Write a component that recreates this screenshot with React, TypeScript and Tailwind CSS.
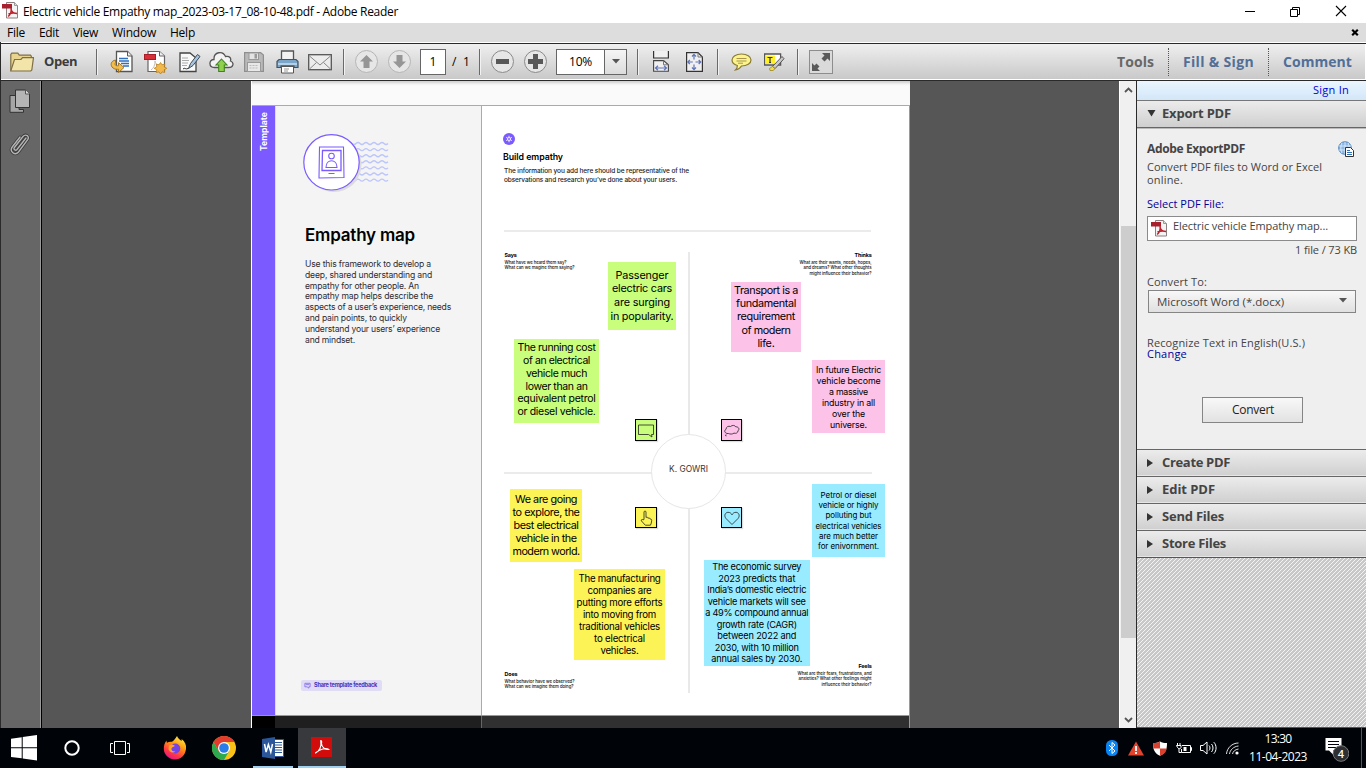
import { useLayoutEffect, useRef, useState } from "react";
import type { ReactNode } from "react";

const UI = "font-['Open_Sans','Noto_Sans',sans-serif]";
const DOC = "font-[Inter,'Noto_Sans',sans-serif]";

/* One line of text whose tracking is adjusted so that it spans `w` pixels. */
function Line({ w, className = "", children }: { w: number; className?: string; children: string }) {
  const ref = useRef<HTMLSpanElement>(null);
  const [tracking, setTracking] = useState(0);
  useLayoutEffect(() => {
    const el = ref.current;
    if (!el) return;
    const natural = el.getBoundingClientRect().width - tracking * children.length;
    const next = (w - natural) / children.length;
    if (Math.abs(next - tracking) > 0.005) setTracking(next);
  });
  return (
    <span ref={ref} className={`inline-block shrink-0 whitespace-pre ${className}`} style={{ letterSpacing: tracking }}>
      {children}
    </span>
  );
}

function PdfIcon({ className }: { className: string }) {
  return (
    <svg viewBox="0 0 17 17" className={className}>
      <path d="M4.500 .5h8l3 3v12.500h-11z" fill="#f4f4f4" stroke="#8b7f80" />
      <path d="M12.500 .5v3h3" fill="#ddd" stroke="#999" />
      <rect x="0" y="2" width="10" height="4.500" fill="#a81f2d" />
      <path d="M9 6c.8 3 .2 5.500-2.800 8.600M9 7c.4 2.800 2.500 4.300 6 4.500M6.500 12c2.400-1 5.500-1.300 8.500-.6" fill="none" stroke="#c01f2b" strokeWidth="1.500" />
    </svg>
  );
}

function Sep({ className }: { className: string }) {
  return <div className={`h-[26px] w-px shrink-0 bg-[#6a6a6a] shadow-[1px_0_0_#f2f2f2] ${className}`} />;
}

function RoundButton({ className, children }: { className: string; children: ReactNode }) {
  return (
    <svg viewBox="0 0 23 23" className={`h-[23px] w-[23px] shrink-0 ${className}`}>
      <circle cx="11.500" cy="11.500" r="11" fill="#e6e6e6" stroke="currentColor" />
      {children}
    </svg>
  );
}

function TitleBar() {
  return (
    <div className="flex h-[23px] shrink-0 items-center bg-white">
      <PdfIcon className="mb-[2px] ml-[2px] h-[17px] w-[17px]" />
      <Line w={375} className="ml-1 text-[12px] leading-[22px] text-black">Electric vehicle Empathy map_2023-03-17_08-10-48.pdf - Adobe Reader</Line>
      <svg viewBox="0 0 104 14" className="mr-[18px] mb-[2px] ml-auto h-[14px] w-[104px]" fill="none" stroke="#000">
        <path d="M1 7.500h10" />
        <path d="M46.500 5.500h7v7h-7zM48.500 5.500v-2h7v7h-2" />
        <path d="M92 2l10 10M102 2l-10 10" strokeWidth="1.100" />
      </svg>
    </div>
  );
}

function MenuBar() {
  return (
    <div className="flex h-[19px] shrink-0 items-center bg-[#ddd] text-[12px] leading-[18px] text-black">
      <Line w={18} className="ml-[7px]">File</Line>
      <Line w={20} className="ml-[14px]">Edit</Line>
      <Line w={25} className="ml-[14px]">View</Line>
      <Line w={44} className="ml-[14px]">Window</Line>
      <Line w={25} className="ml-[14px]">Help</Line>
      <svg viewBox="0 0 8 7" className="mr-[7px] ml-auto h-[7px] w-[8px]">
        <path d="M1.200 .8l5.600 5.400M6.800 .8L1.200 6.200" stroke="#000" strokeWidth="2.200" />
      </svg>
    </div>
  );
}

function ToolBar() {
  return (
    <div className="flex h-[39px] shrink-0 flex-col border-b border-l border-[#2a2a2a] bg-white">
      <div className="mt-px h-px shrink-0 bg-[#2a2a2a]" />
      <div className="mr-px flex h-[35px] items-center bg-linear-to-b from-[#efefef] to-[#c9c9c9]">
        <svg viewBox="0 0 24 20" className="ml-[9px] h-[20px] w-[24px] shrink-0">
          <path d="M.8 18.500V2.500l1-1.300h6l1.500 2H20.500l.8 1v3" fill="#e8d48e" stroke="#7e6f48" strokeWidth="1.200" />
          <path d="M.8 18.800L4.500 7.500H11l1.500-1.800H23.500L21.800 18l-1 1z" fill="#f3e4a9" stroke="#7e6f48" strokeWidth="1.200" />
        </svg>
        <Line w={33} className="ml-[10px] text-[13px] font-bold text-[#3c3c3c]">Open</Line>
        <Sep className="ml-[19px]" />
        {/* convert */}
        <svg viewBox="0 0 24 24" className="ml-[13px] h-[24px] w-[24px] shrink-0">
          <path d="M6.500 1.500h11l4.500 4.500v15.500H6.500z" fill="#fff" stroke="#555" strokeWidth="1.300" />
          <path d="M17.500 1.500V6H22" fill="#eee" stroke="#555" />
          <path d="M9 8.500h9M9 11h10M11 13.500h8M13 16h6" stroke="#2f6fc0" strokeWidth="1.300" />
          <path d="M5.500 10C.5 11 0 15.500 3 18c1.500 1.200 4 1.500 5.500 1.200V22.500l5.500-5-5.500-4.800v3c-2.800.5-4.200-.8-3-3.200z" fill="#f1bd4b" stroke="#9b6c1c" strokeWidth=".9" />
        </svg>
        {/* create */}
        <svg viewBox="0 0 24 24" className="ml-[10px] h-[24px] w-[24px] shrink-0">
          <path d="M4 1.500h11.500L20.500 6v15.500H4z" fill="#fff" stroke="#666" strokeWidth="1.200" />
          <path d="M15.500 1.500V6h5" fill="#eee" stroke="#666" />
          <rect x=".5" y="4.500" width="11" height="5" fill="#d92f38" stroke="#a51d26" />
          <path d="M7 20c3-2 4-5 4-9 1 4 3 5 6 5" fill="none" stroke="#c9bdbd" />
          <path d="M16.500 12.500l1.500 2.300 2.700-.6-.5 2.700 2.600 1.400-2.600 1.500.5 2.700-2.700-.6-1.500 2.100-1.500-2.100-2.700.6.5-2.700-2.600-1.500 2.600-1.400-.5-2.700 2.700.6z" fill="#f2b94a" stroke="#b67e1f" strokeWidth=".8" />
        </svg>
        {/* edit */}
        <svg viewBox="0 0 22 22" className="ml-[11px] h-[22px] w-[22px] shrink-0">
          <path d="M1 2h10l6 5v13.500H1z" fill="#fafafa" stroke="#444" strokeWidth="1.300" />
          <path d="M3 7h6M3 9.500h7M3 12h6M3 14.500h5" stroke="#aaa" />
          <path d="M9.500 17.500l2-5L18.500 3.500l2.500 2L14 14.500z" fill="#a9c5de" stroke="#3c4a58" />
          <path d="M4 18c2-2 2 1 5.500-.6" fill="none" stroke="#333" />
        </svg>
        {/* cloud */}
        <svg viewBox="0 0 25 24" className="ml-[8px] h-[24px] w-[25px] shrink-0">
          <path d="M5.500 17.500C-.5 17.500-.5 9.500 5 9.500 4.500 1.500 14 .5 16.500 6.500c4.500-.8 5.800 2 5 4.500 4 1.500 3 6.500-2 6.500z" fill="#f3f3f3" stroke="#555" strokeWidth="1.300" />
          <path d="M12.500 9l5.500 6h-2.700v6.500H9.700V15H7z" fill="#8fd04c" stroke="#41821f" strokeWidth="1.100" />
        </svg>
        {/* save */}
        <svg viewBox="0 0 20 22" className="ml-[10px] h-[22px] w-[20px] shrink-0">
          <path d="M.6 1.600h16l2.800 2.500v16.300H.6z" fill="#b9b9b9" stroke="#8f8f8f" strokeWidth="1.200" />
          <rect x="5" y="2" width="9.500" height="6.500" fill="#e3e3e3" stroke="#999" />
          <rect x="10.500" y="3" width="2.500" height="4.500" fill="#999" />
          <rect x="3.500" y="11.500" width="13" height="9" fill="#e8e8e8" stroke="#999" />
          <path d="M5.500 14.500h9M5.500 17h9" stroke="#bbb" strokeDasharray="2 1" />
        </svg>
        {/* print */}
        <svg viewBox="0 0 23 24" className="ml-[12px] h-[24px] w-[23px] shrink-0">
          <path d="M5.500 1h12v9h-12z" fill="#f2f2f2" stroke="#555" strokeWidth="1.300" />
          <path d="M1 11.500l2-2h17l2 2v6H1z" fill="#7ba6ca" stroke="#3e5468" strokeWidth="1.200" />
          <path d="M2 13h19v2H2z" fill="#b3d2e8" />
          <path d="M4.500 15.500h14v2h-14z" fill="#3a3a3a" />
          <path d="M5.500 16.500h12v6.500h-12z" fill="#fff" stroke="#555" />
          <path d="M8 19h5M8 21h4" stroke="#999" />
        </svg>
        {/* mail */}
        <svg viewBox="0 0 24 18" className="ml-[9px] h-[18px] w-[24px] shrink-0">
          <rect x=".7" y="1.700" width="22.600" height="15" fill="#ededed" stroke="#555" strokeWidth="1.300" />
          <path d="M1.500 3L12 12 22.500 3M1.500 16l7-6.500M22.500 16l-7-6.500" fill="none" stroke="#888" />
        </svg>
        <Sep className="ml-[11px]" />
        <RoundButton className="ml-[11px] text-[#b5b5b5]">
          <path d="M11.500 5l6.500 6.500h-3.500V18h-6v-6.500H5z" fill="#969696" />
        </RoundButton>
        <RoundButton className="ml-[10px] text-[#b5b5b5]">
          <path d="M11.500 18L5 11.500h3.500V5h6v6.500H18z" fill="#969696" />
        </RoundButton>
        <div className="ml-[9px] flex h-[26px] w-[26px] shrink-0 items-center justify-center border border-[#666] bg-white text-[12px] text-black">1</div>
        <Line w={18} className="ml-[6px] text-[12px] text-black">/  1</Line>
        <Sep className="ml-[9px]" />
        <RoundButton className="ml-[11px] text-[#8a8a8a]">
          <path d="M5 9h13v5H5z" fill="#585858" />
        </RoundButton>
        <RoundButton className="ml-[10px] text-[#8a8a8a]">
          <path d="M4 9h5V4h5v5h5v5h-5v5H9v-5H4z" fill="#585858" />
        </RoundButton>
        <div className="ml-[9px] flex h-[26px] w-[71px] shrink-0 border border-[#666] bg-white">
          <div className="flex flex-1 items-center justify-center text-black">
            <Line w={23} className="text-[12px]">10%</Line>
          </div>
          <div className="flex w-[22px] items-center justify-center border-l border-[#666] bg-linear-to-b from-[#f5f5f5] to-[#dcdcdc]">
            <svg viewBox="0 0 8 5" className="h-[5px] w-[8px]"><path d="M0 0h8L4 4.500z" fill="#555" /></svg>
          </div>
        </div>
        <Sep className="ml-[10px]" />
        {/* fit width */}
        <svg viewBox="0 0 16 21" className="ml-[15px] h-[21px] w-[16px] shrink-0">
          <path d="M.6 0v7h14.800V0" fill="#f0f0f0" stroke="#333" strokeWidth="1.200" />
          <path d="M.6 20.300V9.600h10l4.800 4.200v6.500z" fill="#f0f0f0" stroke="#444" strokeWidth="1.100" />
          <path d="M10.500 9.600v4.200h5" fill="none" stroke="#777" />
          <path d="M2.500 17h11M5 14.800L2.500 17 5 19.200M11 14.800l2.500 2.200-2.500 2.200" fill="none" stroke="#5f75b8" strokeWidth="1.200" />
        </svg>
        {/* fit page */}
        <svg viewBox="0 0 17 20" className="ml-[17px] h-[20px] w-[17px] shrink-0">
          <path d="M.6.600h11.400l4.400 4.400v14.400H.6z" fill="#f0f0f0" stroke="#333" strokeWidth="1.200" />
          <path d="M12 .6V5h4.400" fill="none" stroke="#777" />
          <path d="M8 2.500v5M8 12.500v5M1.800 10h5M9.500 10h5M6 4.500l2-2.200 2 2.200M6 15.500l2 2.200 2-2.200M3.800 8l-2 2 2 2M12.700 8l2 2-2 2" fill="none" stroke="#5f75b8" strokeWidth="1.200" />
        </svg>
        <Sep className="ml-[14px]" />
        {/* comment */}
        <svg viewBox="0 0 21 18" className="ml-[13px] h-[18px] w-[21px] shrink-0">
          <path d="M10.500 1C16 1 20 3.500 20 7s-4 6-9.500 6c-1 1.800-3 3.500-6 4 1.500-1.500 2-2.700 1.800-4.500C3 11.500 1 9.500 1 7c0-3.500 4-6 9.500-6z" fill="#fbf48c" stroke="#8a7a35" strokeWidth="1.200" />
          <path d="M5.500 5.500h10M5.500 8h10M7 10.200h5" stroke="#a9944e" />
        </svg>
        {/* highlight */}
        <svg viewBox="0 0 21 18" className="ml-[12px] h-[18px] w-[21px] shrink-0">
          <path d="M.6 1h16v11H.6z" fill="#fff" stroke="#555" strokeWidth="1.300" />
          <path d="M2 2.500h9v8.500H2z" fill="#fdf02b" />
          <path d="M3.500 4.500h5M6 4.500v5M5 9.500h2" stroke="#333" strokeWidth="1.200" />
          <path d="M8.500 13.500L18 3.500l2 2.200-9 10z" fill="#c9c9c9" stroke="#555" />
          <path d="M5.500 15.500l3-2 2.500 2.300-2 1.700H6z" fill="#efe04a" stroke="#99882b" strokeWidth=".8" />
        </svg>
        <Sep className="ml-[12px]" />
        <svg viewBox="0 0 24 24" className="ml-[11px] h-[24px] w-[24px] shrink-0">
          <rect x=".5" y=".5" width="23" height="23" fill="#dadada" stroke="#8d8d8d" />
          <path d="M21 3v8l-2.500-2.500-3 3-3-3 3-3L13 3zM3 21v-8l2.500 2.500 2-2 3 3-2 2L11 21z" fill="#5a5a5a" />
        </svg>
        <div className="mr-[13px] ml-auto flex items-center text-[14px] font-bold text-[#516f97]">
          <Line w={37} className="text-[#686868]">Tools</Line>
          <div className="ml-[14px] h-[28px] border-l border-dotted border-[#555]" />
          <Line w={71} className="ml-[14px]">Fill &amp; Sign</Line>
          <div className="ml-[14px] h-[28px] border-l border-dotted border-[#555]" />
          <Line w={69} className="ml-[14px]">Comment</Line>
        </div>
      </div>
    </div>
  );
}

function NavRail() {
  return (
    <div className="flex w-[42px] shrink-0 flex-col items-center border-r border-l border-r-black border-l-[#2a2a2a] bg-[#666] pt-[8px] shadow-[inset_-1px_0_0_#999]">
      <svg viewBox="0 0 22 24" className="mr-[2px] h-[24px] w-[22px]">
        <path d="M1 6.500h9v14h4.500v2.800H1z" fill="#a5a5a5" stroke="#333" />
        <path d="M6.500 1h10L20.500 5v13.500h-14z" fill="#b5b5b5" stroke="#333" />
        <path d="M16.500 1v4h4" fill="#ddd" stroke="#555" />
      </svg>
      <svg viewBox="0 0 22 24" className="mt-[19px] mr-[2px] h-[24px] w-[22px]" fill="none" strokeLinecap="round">
        <path d="M17 6L8 17.500c-1.500 1.800-4-.3-2.600-2L14 4.500c2.600-3 7-.3 4.700 3.200L9.500 20c-3.500 4-9.500-.4-6.300-5L11 5" stroke="#3a3a3a" strokeWidth="3" />
        <path d="M17 6L8 17.500c-1.500 1.800-4-.3-2.600-2L14 4.500c2.600-3 7-.3 4.700 3.200L9.500 20c-3.500 4-9.500-.4-6.300-5L11 5" stroke="#b4b4b4" strokeWidth="1.400" />
      </svg>
    </div>
  );
}

type NoteProps = { box: string; text: string; lines: [string, number][] };

function Note({ box, text, lines }: NoteProps) {
  return (
    <div className={`absolute flex flex-col items-center justify-center text-black ${box} ${text}`}>
      {lines.map(([t, w]) => (
        <Line key={t} w={w}>{t}</Line>
      ))}
    </div>
  );
}

const notes: NoteProps[] = [
  { box: "left-[126px] top-[156px] w-[68px] h-[68px] bg-[#c8fe7c]", text: "text-[10.800px] leading-[13.600px]", lines: [["Passenger", 53], ["electric cars", 60], ["are surging", 56], ["in popularity.", 63]] },
  { box: "left-[32px] top-[233px] w-[85px] h-[84px] bg-[#c8fe7c] pb-px", text: "text-[10.500px] leading-[12.700px]", lines: [["The running cost", 78], ["of an electrical", 67], ["vehicle much", 61], ["lower than an", 62], ["equivalent petrol", 78], ["or diesel vehicle.", 78]] },
  { box: "left-[249px] top-[176px] w-[70px] h-[70px] bg-[#fdc2e8]", text: "text-[10.800px] leading-[13.300px]", lines: [["Transport is a", 64], ["fundamental", 60], ["requirement", 58], ["of modern", 49], ["life.", 17]] },
  { box: "left-[330px] top-[254px] w-[73px] h-[73px] bg-[#fdc2e8]", text: "text-[8.800px] leading-[11px]", lines: [["In future Electric", 65], ["vehicle become", 64], ["a massive", 39], ["industry in all", 53], ["over the", 33], ["universe.", 37]] },
  { box: "left-[28px] top-[383px] w-[72px] h-[73px] bg-[#fcf357]", text: "text-[10.800px] leading-[13px]", lines: [["We are going", 62], ["to explore, the", 67], ["best electrical", 65], ["vehicle in the", 61], ["modern world.", 67]] },
  { box: "left-[92px] top-[463px] w-[91px] h-[91px] bg-[#fcf357]", text: "text-[9.700px] leading-[12px]", lines: [["The manufacturing", 82], ["companies are", 64], ["putting more efforts", 86], ["into moving from", 73], ["traditional vehicles", 81], ["to electrical", 51], ["vehicles.", 38]] },
  { box: "left-[221.500px] top-[454px] w-[106.500px] h-[106px] bg-[#99ebff]", text: "text-[9.200px] leading-[11.500px]", lines: [["The economic survey", 89], ["2023 predicts that", 77], ["India’s domestic electric", 99], ["vehicle markets will see", 98], ["a 49% compound annual", 103], ["growth rate (CAGR)", 80], ["between 2022 and", 79], ["2030, with 10 million", 84], ["annual sales by 2030.", 91]] },
  { box: "left-[330px] top-[378px] w-[73px] h-[73px] bg-[#99ebff]", text: "text-[8px] leading-[10.300px]", lines: [["Petrol or diesel", 56], ["vehicle or highly", 60], ["polluting but", 46], ["electrical vehicles", 66], ["are much better", 59], ["for enivornment.", 61]] },
];

const quadrants: { box: string; title: [string, number]; lines: [string, number][] }[] = [
  { box: "left-[22.500px] top-[146px] items-start", title: ["Says", 12], lines: [["What have we heard them say?", 62], ["What can we magine them saying?", 70]] },
  { box: "right-[37.500px] top-[146px] items-end", title: ["Thinks", 17], lines: [["What are their wants, needs, hopes,", 72], ["and dreams? What other thoughts", 68], ["might influence their behavior?", 62]] },
  { box: "left-[22.500px] top-[565px] items-start", title: ["Does", 13], lines: [["What behavior have we observed?", 70], ["What can we imagine them doing?", 69]] },
  { box: "right-[37.500px] top-[557px] items-end", title: ["Feels", 13], lines: [["What are their fears, frustrations, and", 74], ["anxieties? What other feelings might", 73], ["influence their behavior?", 50]] },
];

const badges: { box: string; d: string }[] = [
  { box: "left-[153px] top-[313px] w-[22px] h-[22px] bg-[#c8fe7c]", d: "M2.500 5h15v9.500h-2l.5 2.500-3.500-2.500h-10z" },
  { box: "left-[239px] top-[313px] w-[21px] h-[22px] bg-[#fdc2e8]", d: "M5 13.500c-2.500-.8-3-3-1-4.200 0-2.500 2.500-3.600 4.500-2.800C10.500 4.800 13 5.300 13.800 6.800c3 0 4 2.500 2.200 4 0 2-2 3-4 2.300-1.500 1.200-4 1.200-5.500.4zM4.300 14.500c-1.200.2-1 1.700.2 1.400" },
  { box: "left-[153px] top-[401px] w-[22px] h-[21px] bg-[#fcf357]", d: "M8 11.500V4c0-1.300 2-1.300 2 0V9.500c1-.8 2 0 2 .8 1-.8 2 0 2 .8 1-.4 1.800.4 1.700 1.500 0 2-.7 3-1.200 4.600H9.300L5.500 13c-.8-1.300.7-2 1.500-1.200z" },
  { box: "left-[239px] top-[401px] w-[21px] h-[21px] bg-[#99ebff]", d: "M10 16.500L4 10.500C1.500 7.500 3.500 4.300 6 4.300c2 0 3.200 1 4 2.500.8-1.500 2-2.500 4-2.500 2.500 0 4.500 3.200 2 6.200z" },
];

const intro: [string, number][] = [
  ["Use this framework to develop a", 126],
  ["deep, shared understanding and", 127],
  ["empathy for other people. An", 114],
  ["empathy map helps describe the", 128],
  ["aspects of a user’s experience, needs", 146],
  ["and pain points, to quickly", 102],
  ["understand your users’ experience", 135],
  ["and mindset.", 50],
];

const waveRows = [0, 1, 2, 3, 4, 5, 6];

function DocumentPage() {
  return (
    <div className={`ml-[209px] flex w-[659px] shrink-0 flex-col border-l border-white ${DOC}`}>
      <div className="h-[24px] shrink-0 bg-[#fafafa] shadow-[inset_0_4px_3px_-2px_#ccc]" />
      <div className="flex h-[611px] shrink-0 border-y border-t-[#aaa] border-b-[#999]">
        <div className="flex w-[23px] justify-center bg-[#7b5bff] pt-[9px]">
          <span className="h-[36px] rotate-180 text-[8.600px] leading-[22px] font-bold text-white [writing-mode:vertical-rl]">Template</span>
        </div>
        <div className="flex w-[207px] flex-col items-start border-r border-l border-r-[#aaa] border-l-[#ddd] bg-[#f4f4f4] pt-[27px]">
          <svg viewBox="0 0 90 62" className="ml-[26px] h-[62px] w-[90px]" fill="none">
            {waveRows.map((r) => (
              <path
                key={r}
                transform={`translate(0 ${r * 6.1})`}
                d="M46 10.500q2-2 4 0t4 0 4 0 4 0 4 0 4 0 4 0 4 0 4 0 4 0"
                stroke="#bcc6fa"
                strokeWidth="1.300"
              />
            ))}
            <circle cx="32" cy="31.500" r="27.500" fill="#dcdcdc" />
            <circle cx="29.500" cy="29.300" r="27.700" fill="#fff" stroke="#7b5bff" strokeWidth="1.200" />
            <g stroke="#7b5bff" strokeWidth="1.100">
              <path d="M17.500 14h24l.5 30.500-25 .5z" />
              <path d="M20.500 17.500h18.500V37.500H20z" strokeWidth="1.300" />
              <circle cx="29.500" cy="23" r="2.800" />
              <path d="M24 34.500c0-9 11-9 11 0zM26.500 40.500h6" />
            </g>
          </svg>
          <Line w={110} className="mt-[26px] ml-[29px] text-[17px] leading-[28px] font-semibold text-black">Empathy map</Line>
          <div className="mt-[10px] ml-[29px] flex flex-col items-start text-[8.600px] leading-[10.830px] text-[#2c2c34]">
            {intro.map(([t, w]) => (
              <Line key={t} w={w}>{t}</Line>
            ))}
          </div>
          <div className="mt-auto mb-[24px] ml-[25px] flex h-[11px] w-[81px] items-center rounded-[2px] bg-[#e0dcf6]">
            <svg viewBox="0 0 8 8" className="ml-[3px] h-[7px] w-[7px]" fill="none" stroke="#7d66e8" strokeWidth=".9">
              <path d="M1 1.500h6v4H5.500V7L3.500 5.500H1zM2 3h4" />
            </svg>
            <Line w={63} className="ml-[3px] text-[5.600px] leading-[11px] font-bold text-[#4a34b8]">Share template feedback</Line>
          </div>
        </div>
        <div className="relative w-[428px] border-r border-[#999] bg-white">
          <div className="flex flex-col items-start pt-[27px] pl-[21px]">
            <svg viewBox="0 0 12 12" className="h-[12px] w-[12px]" fill="none">
              <circle cx="6" cy="6" r="6" fill="#7b5bff" />
              <path d="M6 2.800v6.400M3.200 4.400l5.600 3.200M8.800 4.400L3.200 7.600" stroke="#fff" strokeWidth=".9" />
              <circle cx="6" cy="6" r="1.500" fill="#7b5bff" stroke="#fff" strokeWidth=".8" />
            </svg>
            <Line w={60} className="mt-[6px] text-[8.800px] leading-[12px] font-semibold text-black">Build empathy</Line>
            <div className="mt-[4px] ml-px flex flex-col items-start text-[6.500px] leading-[9px] font-medium text-[#222]">
              <Line w={185}>The information you add here should be representative of the</Line>
              <Line w={173}>observations and research you’ve done about your users.</Line>
            </div>
          </div>
          <div className="absolute top-[124px] left-[22px] h-[2px] w-[367px] bg-[#ebebeb]" />
          <div className="absolute top-[366px] left-[22px] h-[2px] w-[368px] bg-[#ebebeb]" />
          <div className="absolute top-[146px] left-[206px] h-[441px] w-[1.500px] bg-[#e9e9e9]" />
          <div className="absolute top-[328px] left-[169px] flex h-[75px] w-[75px] items-center justify-center rounded-full border border-[#e6e6e6] bg-white pb-[5px]">
            <Line w={39} className="text-[8.400px] text-[#333]">K. GOWRI</Line>
          </div>
          {quadrants.map((q) => (
            <div key={q.title[0]} className={`absolute flex flex-col text-[4.300px] leading-[5.600px] font-medium text-[#111] ${q.box}`}>
              <Line w={q.title[1]} className="mb-px text-[5.400px] leading-[6.500px] font-bold text-black">{q.title[0]}</Line>
              {q.lines.map(([t, w]) => (
                <Line key={t} w={w}>{t}</Line>
              ))}
            </div>
          ))}
          {notes.map((n) => (
            <Note key={n.lines[0][0]} {...n} />
          ))}
          {badges.map((b) => (
            <div key={b.box} className={`absolute border border-black shadow-[1px_1px_1px_#ddd] ${b.box}`}>
              <svg viewBox="0 0 20 20" className="h-[20px] w-[20px]" fill="none" stroke="#222" strokeWidth=".8">
                <path d={b.d} />
              </svg>
            </div>
          ))}
        </div>
      </div>
      <div className="flex flex-1">
        <div className="w-[23px] bg-black" />
        <div className="w-[207px] border-r border-[#666] bg-[#1f1f1f]" />
        <div className="flex-1 border-r border-[#999] bg-[#303030]" />
      </div>
    </div>
  );
}

function ScrollBar() {
  return (
    <div className="flex w-[17px] shrink-0 flex-col items-center border-l border-white bg-[#f0f0f0]">
      <svg viewBox="0 0 9 6" className="mt-[6px] h-[6px] w-[9px]" fill="none" stroke="#555" strokeWidth="1.800"><path d="M1 5l3.500-3.500L8 5" /></svg>
      <div className="mt-[133px] h-[412px] w-[15px] bg-[#cdcdcd]" />
      <svg viewBox="0 0 9 6" className="mt-auto mb-[5px] h-[6px] w-[9px]" fill="none" stroke="#555" strokeWidth="1.800"><path d="M1 1l3.500 3.500L8 1" /></svg>
    </div>
  );
}

const sections: [string, number][] = [["Create PDF", 68], ["Edit PDF", 53], ["Send Files", 62], ["Store Files", 64]];

function SidePanel() {
  return (
    <div className="flex w-[230px] shrink-0 flex-col border-l border-[#2a2a2a] bg-[#efefef] text-[11px] text-[#444]">
      <div className="flex h-[20px] shrink-0 items-center justify-end border-b border-[#777] bg-linear-to-b from-[#eaf5ff] to-[#d3e7f8] pr-[17px]">
        <Line w={36} className="text-[11px] text-[#0000dc]">Sign In</Line>
      </div>
      <div className="flex h-[27px] shrink-0 items-center border-b border-[#666] bg-linear-to-b from-[#ececec] to-[#cfcfcf] pb-[2px] shadow-[0_1px_0_#bbb]">
        <svg viewBox="0 0 9 7" className="ml-[10px] h-[7px] w-[9px]"><path d="M.5 0h8L4.500 6.500z" fill="#333" /></svg>
        <Line w={69} className="ml-[6px] text-[13px] leading-[24px] font-bold">Export PDF</Line>
      </div>
      <div className="flex h-[321px] shrink-0 flex-col items-start pr-[9px] pl-[10px]">
        <div className="mt-[12px] flex h-[18px] w-full items-center justify-between">
          <Line w={98} className="text-[12px] font-bold">Adobe ExportPDF</Line>
          <svg viewBox="0 0 16 16" className="mr-[3px] h-[16px] w-[16px]">
            <circle cx="7" cy="7" r="6.300" fill="#8fb9e3" stroke="#4c82bd" />
            <path d="M1 5h12M1 9h12M7 .7v12.600M3.800 2c-1.300 3-1.300 7 0 10M10.200 2c1.300 3 1.300 7 0 10" fill="none" stroke="#e3f0fb" strokeWidth=".8" />
            <path d="M7.500 6.500h5l3 3v6h-8z" fill="#fff" stroke="#333" />
            <path d="M9 9.500h3M9 11.500h5M9 13.500h5" stroke="#2f6fc0" />
          </svg>
        </div>
        <Line w={175} className="mt-[2px] leading-[13px]">Convert PDF files to Word or Excel</Line>
        <Line w={36} className="leading-[13px]">online.</Line>
        <Line w={77} className="mt-[11px] leading-[13px] text-[#00009a]">Select PDF File:</Line>
        <div className="mt-[6px] flex h-[25px] w-[210px] items-center border border-[#8b8b8b] bg-white">
          <PdfIcon className="mb-px ml-[3px] h-[17px] w-[17px]" />
          <Line w={155} className="ml-[5px] pb-[4px]">Electric vehicle Empathy map...</Line>
        </div>
        <Line w={62} className="mt-[2px] self-end leading-[13px]">1 file / 73 KB</Line>
        <Line w={60} className="mt-[19px] leading-[14px]">Convert To:</Line>
        <div className="mt-px ml-px flex h-[23px] w-[208px] items-center justify-between border border-[#858585] bg-linear-to-b from-[#f8f8f8] to-[#e0e0e0] pr-[8px] pl-[8px]">
          <Line w={127} className="text-[11.500px]">Microsoft Word (*.docx)</Line>
          <svg viewBox="0 0 8 5" className="mb-[2px] h-[5px] w-[8px]"><path d="M0 0h8L4 4.500z" fill="#555" /></svg>
        </div>
        <Line w={158} className="mt-[24px] leading-[11px]">Recognize Text in English(U.S.)</Line>
        <Line w={40} className="leading-[12px] text-[#00009a]">Change</Line>
        <div className="mt-[37px] ml-[55px] flex h-[26px] w-[101px] items-center justify-center border border-[#858585] bg-linear-to-b from-[#f8f8f8] to-[#e2e2e2] text-[#222]">
          <Line w={42} className="ml-px text-[12px]">Convert</Line>
        </div>
      </div>
      {sections.map(([t, w]) => (
        <div key={t} className="flex h-[27px] shrink-0 items-center border-t border-[#666] bg-linear-to-b from-[#ececec] to-[#cfcfcf] pb-[2px] shadow-[inset_0_-1px_0_#e6e6e6]">
          <svg viewBox="0 0 6 8" className="mt-px ml-[10px] h-[8px] w-[6px]"><path d="M0 0v8l6-4z" fill="#333" /></svg>
          <Line w={w} className="ml-[9px] text-[13px] leading-[24px] font-bold">{t}</Line>
        </div>
      ))}
      <svg className="w-full flex-1 border-t border-b border-[#555]" shapeRendering="crispEdges">
        <defs>
          <pattern id="hatch" width="4" height="4" patternUnits="userSpaceOnUse">
            <rect width="4" height="4" fill="#c8c8c8" />
            <path d="M3 0h1v1H3zM2 1h1v1H2zM1 2h1v1H1zM0 3h1v1H0z" fill="#f4f4f4" />
          </pattern>
        </defs>
        <rect width="100%" height="100%" fill="url(#hatch)" />
      </svg>
    </div>
  );
}

function TaskBar() {
  return (
    <div className="flex h-[40px] shrink-0 items-center bg-[#000409] text-white">
      <svg viewBox="0 0 26 26" className="ml-[11px] h-[26px] w-[26px] shrink-0" fill="#fff">
        <path d="M0 3.800L10.700 2.300V12.300H0zM11.700 2.100L26 0v12.300H11.700zM0 13.300h10.700v10L0 21.900zM11.700 13.300H26V25.500L11.700 23.500z" />
      </svg>
      <svg viewBox="0 0 16 16" className="ml-[27px] h-[16px] w-[16px] shrink-0"><circle cx="8" cy="8" r="6.700" fill="none" stroke="#fff" strokeWidth="2" /></svg>
      <svg viewBox="0 0 20 16" className="ml-[30px] h-[16px] w-[20px] shrink-0" fill="none" stroke="#fff">
        <path d="M4.500 1.500h11v13h-11zM3 3.500H.5v9H3M17 3.500h2.500v9H17" />
      </svg>
      {/* Firefox */}
      <svg viewBox="0 0 24 24" className="ml-[33px] h-[24px] w-[24px] shrink-0">
        <defs>
          <linearGradient id="fox" x1=".8" y1="0" x2=".3" y2="1">
            <stop offset="0" stopColor="#fff44f" /><stop offset=".4" stopColor="#ff980e" /><stop offset=".75" stopColor="#ff3647" /><stop offset="1" stopColor="#e31587" />
          </linearGradient>
        </defs>
        <path d="M14 0c1 2.500 3 3.500 4.500 5 .3-1 .2-1.500 0-2C22 5.500 23.500 9 23 13c-.8 6.500-5.500 10.500-11 10.500S1 19 .8 13C.7 10 1.500 7 3.500 4.500c0 1 .2 1.700.5 2.200C5.500 5.800 7 5.500 9 5.800 11 4.500 12.500 2.500 14 0z" fill="url(#fox)" />
        <circle cx="12.300" cy="12.500" r="5" fill="#7542e5" />
        <path d="M6 9.500c2-1.500 4.500-.8 6 .3-1 1.400-3 1-3.500 2.500-.5 2.500 2 3.700 4 3.200-2 2-6.500 1-7-2.500z" fill="#ffa42a" />
      </svg>
      {/* Chrome */}
      <svg viewBox="0 0 24 24" className="ml-[25px] h-[24px] w-[24px] shrink-0">
        <circle cx="12" cy="12" r="12" fill="#fbc116" />
        <path d="M12 6L6.800 15 1.600 6A12 12 0 0 0 12 24l5.200-9z" fill="#2da94f" />
        <path d="M1.600 6A12 12 0 0 1 22.400 6H12L6.800 15z" fill="#e33b2e" />
        <circle cx="12" cy="12" r="6" fill="#fff" />
        <circle cx="12" cy="12" r="4.800" fill="#2a7de9" />
      </svg>
      {/* Word */}
      <div className="ml-[17px] flex h-full w-[40px] shrink-0 flex-col items-center justify-end border-b-2 border-[#9fd0f0]">
        <svg viewBox="0 0 22 22" className="mb-[7px] h-[22px] w-[22px]">
          <path d="M12 2.500h9.500v17H12z" fill="#fff" stroke="#2b579a" />
          <path d="M13 5.500h7M13 8h7M13 10.500h7M13 13h7M13 15.500h7" stroke="#2b579a" />
          <path d="M0 2l13-2v22L0 20z" fill="#2b579a" />
          <path d="M2.500 7l1.600 8 2.300-7.500L8.800 15l1.700-8" fill="none" stroke="#fff" strokeWidth="1.500" />
        </svg>
      </div>
      {/* Adobe Reader */}
      <div className="ml-[5px] flex h-full w-[48px] shrink-0 flex-col items-center justify-end border-b-2 border-[#9fd0f0] bg-[#38393d]">
        <svg viewBox="0 0 21 20" className="mr-px mb-[9px] h-[20px] w-[21px]">
          <rect width="21" height="20" fill="#d20b0b" />
          <path d="M4.500 16c4-2 6-7 5.200-12.500.8 0 1.300 1 .8 3 0 3 3.500 6.500 7.500 6-3-1.700-9-.8-13.500 3.500z" fill="none" stroke="#fff" strokeWidth="1.100" strokeLinejoin="round" />
        </svg>
      </div>
      {/* tray */}
      <svg viewBox="0 0 12 16" className="ml-auto h-[16px] w-[12px] shrink-0">
        <rect width="12" height="16" rx="5.500" fill="#0a84f0" />
        <path d="M3 5l6 6-3 2.500v-11L9 5l-6 6" fill="none" stroke="#fff" />
      </svg>
      <svg viewBox="0 0 16 15" className="ml-[10px] h-[15px] w-[16px] shrink-0">
        <path d="M8 .5l8 14H0z" fill="#e0442f" />
        <path d="M8 5v5M8 11v2" stroke="#fff" strokeWidth="1.800" />
      </svg>
      <svg viewBox="0 0 14 15" className="ml-[9px] h-[15px] w-[14px] shrink-0">
        <path d="M7 .5C5 2 3 2 0 2c0 6 1 10 7 12.800C13 12 14 8 14 2c-3 0-5 0-7-1.500z" fill="#fff" />
        <path d="M7 .5C5 2 3 2 0 2l.3 5.500H7zM7 7.500h6.700c-.5 3.500-2.700 6-6.700 7.300z" fill="#d9402e" />
      </svg>
      <svg viewBox="0 0 16 12" className="ml-[9px] h-[12px] w-[16px] shrink-0" fill="none" stroke="#fff">
        <path d="M6 3.500h8.500v7h-9V7M14.500 5.500h1v3h-1M.5 3.500h4.500v2c0 1.500-3 1.500-3.500 0zM1.500 1v2.500M4 1v2.500M3 6.500v4h2.500" />
        <path d="M7.500 5h3v4h-3z" fill="#fff" stroke="none" />
      </svg>
      <svg viewBox="0 0 17 14" className="ml-[8px] h-[14px] w-[17px] shrink-0" fill="none" stroke="#fff">
        <path d="M.5 4.500h2.500l4-3.500v12L3 9.500H.5zM9 4.500c1.300 1.300 1.300 3.700 0 5M11.500 3c2 2 2 6 0 8M13.800 1.200c3 3 3 8.500 0 11.500" />
      </svg>
      <svg viewBox="0 0 13 13" className="mt-px ml-[9px] h-[13px] w-[13px] shrink-0" fill="none" stroke="#ddd">
        <path d="M.5 12C1 6 6 1 12.500 1M3.500 12c.5-4 4-7.500 9-8M6.500 12c.5-2.500 2.500-4.500 6-5" />
        <circle cx="11" cy="11" r="1.600" fill="#fff" stroke="none" />
      </svg>
      <div className="ml-[10px] flex w-[58px] shrink-0 flex-col items-center text-[12px] leading-[18px]">
        <Line w={27}>13:30</Line>
        <Line w={58}>11-04-2023</Line>
      </div>
      <svg viewBox="0 0 24 24" className="mt-[3px] ml-[18px] h-[24px] w-[24px] shrink-0">
        <path d="M.5 0h16v12.500H8v4L4 12.500H.5z" fill="#fff" />
        <path d="M3 3.500h11M3 6.500h11M3 9.500h8" stroke="#000409" />
        <circle cx="16" cy="15.500" r="7.800" fill="#2d2f33" stroke="#777" />
        <text x="16" y="19.500" textAnchor="middle" fontSize="11" fontWeight="600" fill="#fff">4</text>
      </svg>
      <div className="mr-[4px] ml-[12px] h-full w-px bg-[#555]" />
    </div>
  );
}

export default function App() {
  return (
    <div className={`flex h-[768px] w-[1366px] flex-col overflow-hidden bg-[#555] ${UI}`}>
      <TitleBar />
      <MenuBar />
      <ToolBar />
      <div className="flex min-h-0 flex-1">
        <NavRail />
        <div className="flex flex-1 bg-[#565656]">
          <DocumentPage />
        </div>
        <ScrollBar />
        <SidePanel />
      </div>
      <TaskBar />
    </div>
  );
}
